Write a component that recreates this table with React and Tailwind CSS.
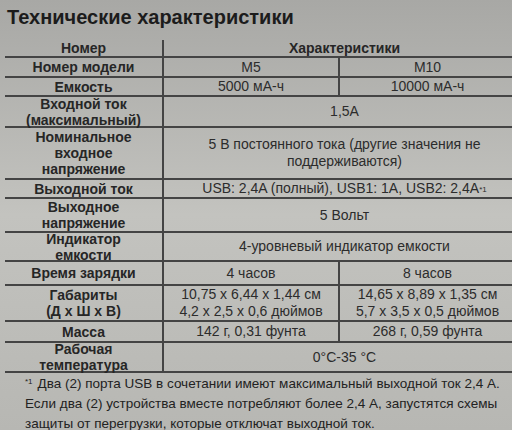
import React from "react";

const rows = [
  { label: ["Номер модели"], h: 20, m5: "M5", m10: "M10" },
  { label: ["Емкость"], h: 19, m5: "5000 мА-ч", m10: "10000 мА-ч" },
  { label: ["Входной ток", "(максимальный)"], h: 31, all: ["1,5A"] },
  {
    label: ["Номинальное", "входное", "напряжение"],
    h: 52,
    all: ["5 В постоянного тока (другие значения не", "поддерживаются)"],
  },
  { label: ["Выходной ток"], h: 19, all: ["USB: 2,4A (полный), USB1: 1A, USB2: 2,4A"], sup: true },
  { label: ["Выходное", "напряжение"], h: 34, all: ["5 Вольт"] },
  { label: ["Индикатор", "емкости"], h: 29, all: ["4-уровневый индикатор емкости"] },
  { label: ["Время зарядки"], h: 24, m5: "4 часов", m10: "8 часов" },
  {
    label: ["Габариты", "(Д х Ш х В)"],
    h: 36,
    m5: ["10,75 x 6,44 x 1,44 см", "4,2 x 2,5 x 0,6 дюймов"],
    m10: ["14,65 x 8,89 x 1,35 см", "5,7 x 3,5 x 0,5 дюймов"],
  },
  { label: ["Масса"], h: 21, m5: "142 г, 0,31 фунта", m10: "268 г, 0,59 фунта" },
  { label: ["Рабочая", "температура"], h: 30, all: ["0°C-35 °C"] },
];

const Lines = ({ items }) =>
  (Array.isArray(items) ? items : [items]).map((t, i) => <div key={i}>{t}</div>);

const cell = "flex flex-col items-center justify-center text-center";

export default function App() {
  return (
    <div
      className="w-[512px] h-[430px] overflow-hidden text-[#262626] bg-linear-to-b from-[#a8a8a5] via-[#c3c3bf] to-[#b7b7b3]"
      style={{ fontFamily: '"Liberation Sans", Arial, sans-serif' }}
    >
      <h1 className="pl-[7px] pt-[6px] h-[40px] text-[20px] leading-[22px] font-bold text-[#1c1c1c]">
        Технические характеристики
      </h1>

      {/* table */}
      <div className="ml-[5px] w-[520px] text-[14px]">
        <div className="flex h-[18px] border-b-2 border-[#444] font-bold leading-[16px]">
          <div className={`${cell} w-[159px] border-r-2 border-[#444]`}>Номер</div>
          <div className={`${cell} flex-1`}>Характеристики</div>
        </div>
        {rows.map((r, i) => (
          <div key={i} className="flex border-b-2 border-[#444]" style={{ height: r.h }}>
            <div className={`${cell} w-[159px] border-r-2 border-[#444] font-bold leading-[16px]`}>
              <Lines items={r.label} />
            </div>
            {r.all ? (
              <div className={`${cell} flex-1 leading-[17px] text-[#2c2c2c]`}>
                {r.all.map((t, j) => (
                  <div key={j}>
                    {t}
                    {r.sup && <sup className="text-[8px] relative -top-[1px]">*1</sup>}
                  </div>
                ))}
              </div>
            ) : (
              <>
                <div className={`${cell} w-[176px] border-r-2 border-[#444] leading-[17px] text-[#2c2c2c]`}>
                  <Lines items={r.m5} />
                </div>
                <div className={`${cell} flex-1 pr-[10px] leading-[17px] text-[#2c2c2c]`}>
                  <Lines items={r.m10} />
                </div>
              </>
            )}
          </div>
        ))}
      </div>

      <div className="pl-[25px] pt-[1px] text-[13.5px] leading-[20px] text-[#222] whitespace-nowrap">
        <div>
          <sup className="text-[8px] mr-[5px]">*1</sup>
          Два (2) порта USB в сочетании имеют максимальный выходной ток 2,4 А.
        </div>
        <div>Если два (2) устройства вместе потребляют более 2,4 А, запустятся схемы</div>
        <div>защиты от перегрузки, которые отключат выходной ток.</div>
      </div>
    </div>
  );
}
